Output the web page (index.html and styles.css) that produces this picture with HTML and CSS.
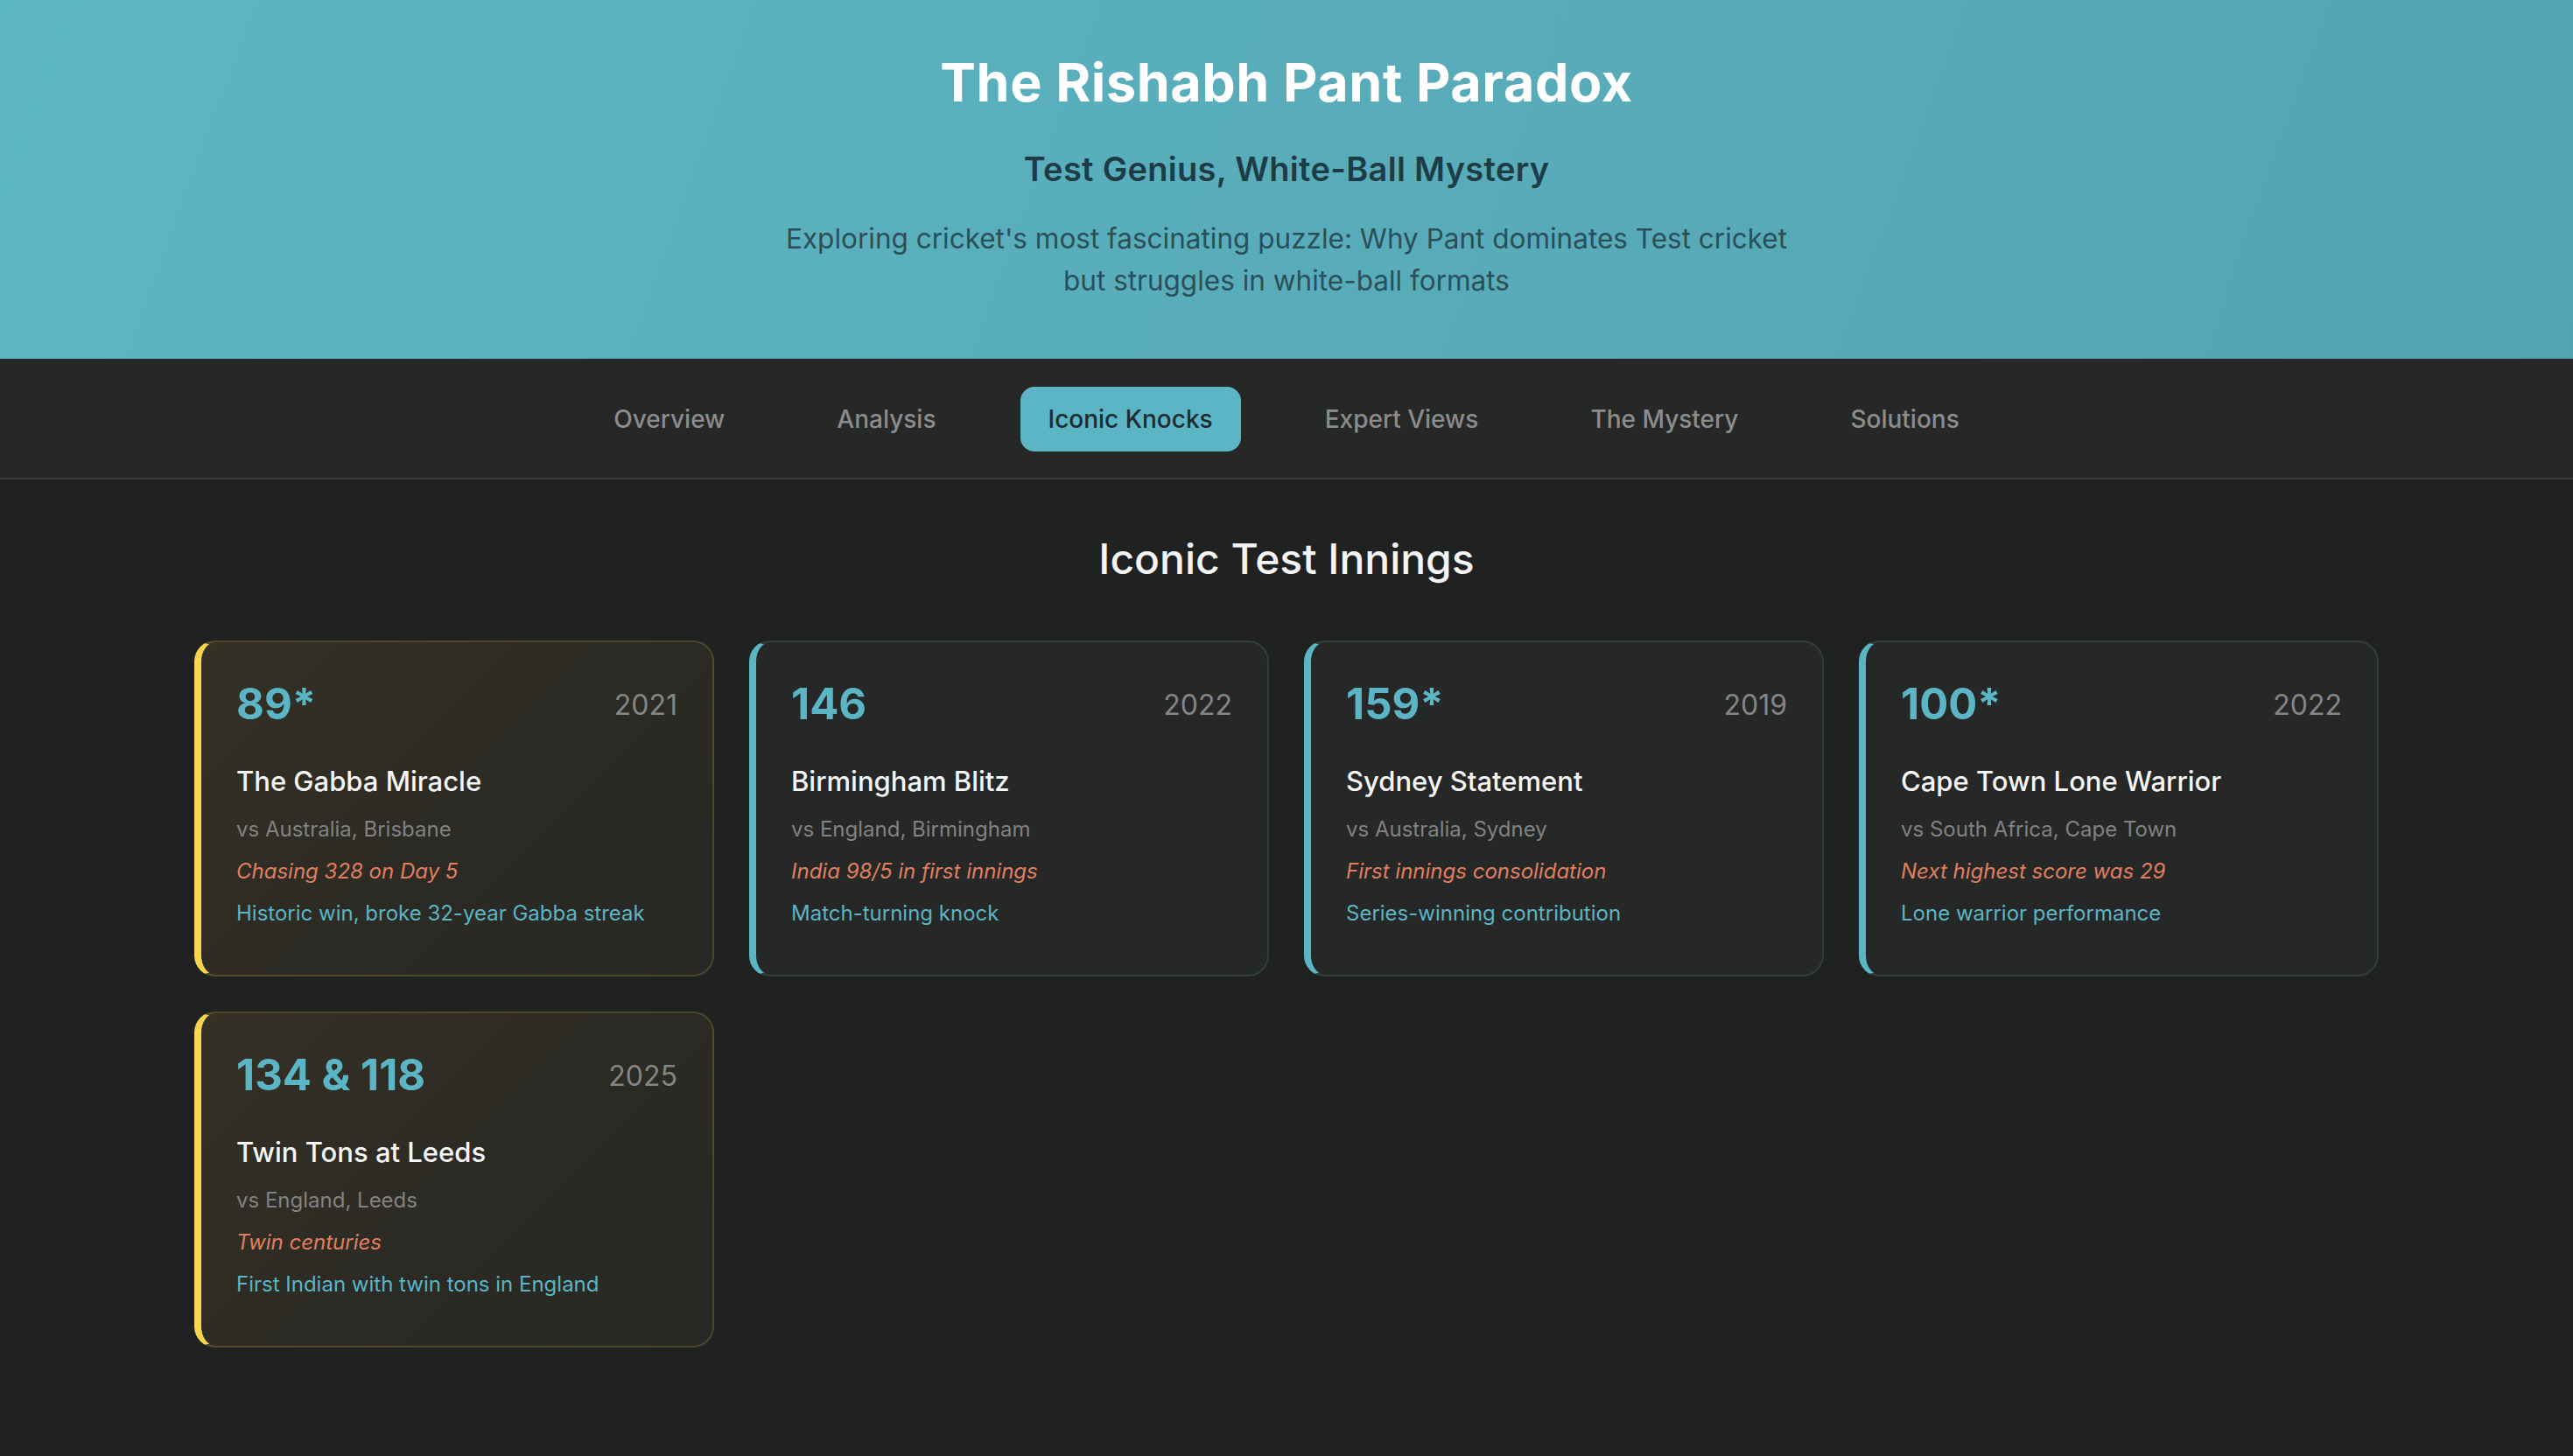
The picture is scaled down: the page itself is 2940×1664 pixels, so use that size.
FILE: index.html
```html
<!DOCTYPE html>
<html lang="en">
<head>
<meta charset="utf-8">
<title>The Rishabh Pant Paradox</title>
<link rel="stylesheet" href="styles.css">
</head>
<body>
<header class="hero">
  <h1 class="hero-title">The Rishabh Pant Paradox</h1>
  <p class="hero-subtitle">Test Genius, White-Ball Mystery</p>
  <p class="hero-desc">Exploring cricket's most fascinating puzzle: Why Pant dominates Test cricket but struggles in white-ball formats</p>
</header>
<nav class="tabs">
  <a class="tab">Overview</a>
  <a class="tab">Analysis</a>
  <a class="tab tab-active">Iconic Knocks</a>
  <a class="tab">Expert Views</a>
  <a class="tab">The Mystery</a>
  <a class="tab">Solutions</a>
</nav>
<main class="content">
  <h2 class="section-title">Iconic Test Innings</h2>
  <div class="grid">
    <div class="card card-gold">
      <div class="card-head"><span class="score">89*</span><span class="year">2021</span></div>
      <h3 class="card-title">The Gabba Miracle</h3>
      <div class="venue">vs Australia, Brisbane</div>
      <div class="context">Chasing 328 on Day 5</div>
      <div class="impact">Historic win, broke 32-year Gabba streak</div>
    </div>
    <div class="card">
      <div class="card-head"><span class="score">146</span><span class="year">2022</span></div>
      <h3 class="card-title">Birmingham Blitz</h3>
      <div class="venue">vs England, Birmingham</div>
      <div class="context">India 98/5 in first innings</div>
      <div class="impact">Match-turning knock</div>
    </div>
    <div class="card">
      <div class="card-head"><span class="score">159*</span><span class="year">2019</span></div>
      <h3 class="card-title">Sydney Statement</h3>
      <div class="venue">vs Australia, Sydney</div>
      <div class="context">First innings consolidation</div>
      <div class="impact">Series-winning contribution</div>
    </div>
    <div class="card">
      <div class="card-head"><span class="score">100*</span><span class="year">2022</span></div>
      <h3 class="card-title">Cape Town Lone Warrior</h3>
      <div class="venue">vs South Africa, Cape Town</div>
      <div class="context">Next highest score was 29</div>
      <div class="impact">Lone warrior performance</div>
    </div>
    <div class="card card-gold">
      <div class="card-head"><span class="score">134 &amp; 118</span><span class="year">2025</span></div>
      <h3 class="card-title">Twin Tons at Leeds</h3>
      <div class="venue">vs England, Leeds</div>
      <div class="context">Twin centuries</div>
      <div class="impact">First Indian with twin tons in England</div>
    </div>
  </div>
</main>
</body>
</html>
```
FILE: styles.css
```css
* { box-sizing: border-box; }
html, body {
  margin: 0;
  padding: 0;
  background: #202121;
  font-family: Inter, "Liberation Sans", sans-serif;
  min-height: 100%;
}
.hero {
  background: linear-gradient(110deg, #5db6c4 0%, #58abb9 60%, #53a4b1 100%);
  text-align: center;
  padding: 58px 0 65px;
}
.hero-title {
  margin: 0 0 42px;
  font-size: 61px;
  line-height: 72px;
  font-weight: 700;
  color: #ffffff;
  letter-spacing: 0.6px;
}
.hero-subtitle {
  margin: 0 0 34px;
  font-size: 38px;
  line-height: 43px;
  font-weight: 600;
  color: #1d3c45;
  letter-spacing: 0.3px;
}
.hero-desc {
  margin: 0 auto;
  max-width: 1180px;
  font-size: 31.5px;
  line-height: 48px;
  color: #2b4f58;
}
.tabs {
  display: flex;
  justify-content: center;
  gap: 64px;
  padding: 32px 0 30px;
  background: #262727;
  border-bottom: 2px solid #3a3b3b;
}
.tab {
  padding: 20px 32px;
  font-size: 28px;
  line-height: 34px;
  color: #8c8c8c;
  border-radius: 16px;
  font-weight: 500;
}
.tab-active {
  background: #5bb5c4;
  color: #1c2c32;
}
.content {
  max-width: 2496px;
  margin: 0 auto;
  padding: 62px 0 80px;
}
.section-title {
  margin: 0 0 64px;
  text-align: center;
  font-size: 48px;
  line-height: 58px;
  font-weight: 500;
  color: #f4f4f4;
}
.grid {
  display: grid;
  grid-template-columns: repeat(4, 1fr);
  gap: 40px;
}
.card {
  background: #262727;
  border: 2px solid rgba(91, 181, 196, 0.16);
  border-left: 8px solid #5bb5c4;
  border-radius: 24px;
  padding: 40px 40px 42px 40px;
}
.card-gold {
  background: linear-gradient(135deg, #343125 0%, #2b2a24 55%, #282825 100%);
  border-color: rgba(250, 214, 80, 0.16);
  border-left-color: #fad650;
}
.card-head {
  display: flex;
  justify-content: space-between;
  align-items: center;
  margin-bottom: 37px;
}
.score {
  font-size: 49px;
  line-height: 62px;
  font-weight: 700;
  color: #5bb5c4;
}
.year {
  font-size: 32px;
  line-height: 39px;
  color: #858585;
}
.card-title {
  margin: 0 0 16px;
  font-size: 31px;
  line-height: 39px;
  font-weight: 500;
  color: #f6f6f6;
}
.venue, .context, .impact {
  font-size: 24px;
  line-height: 40px;
  margin-bottom: 8px;
}
.venue { color: #828282; }
.context { color: #e07f5f; font-style: italic; }
.impact { color: #5bb5c4; }
```
